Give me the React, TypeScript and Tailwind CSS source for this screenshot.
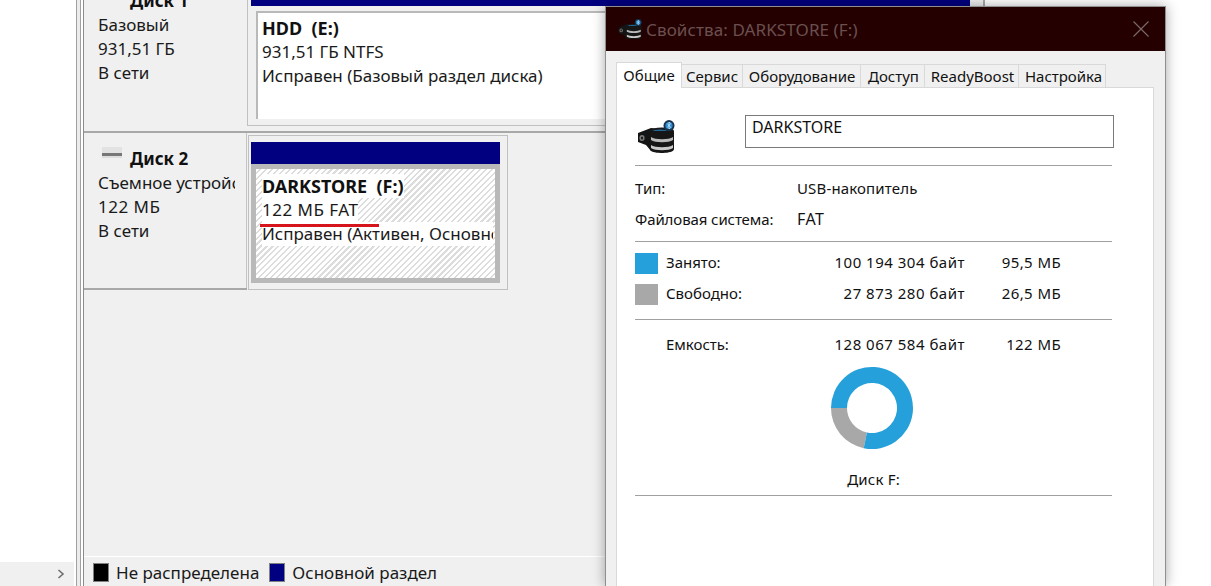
import React from "react";

const font = "font-['Noto_Sans','Open_Sans',sans-serif]";

const DiskGlyph = () => (
  <svg width="20" height="11" viewBox="0 0 20 11" className="shrink-0 ml-[4px] -translate-y-[7px]">
    <rect x="0" y="0" width="20" height="6" fill="#e2e2e2" />
    <rect x="0" y="6" width="20" height="3" fill="#777777" />
    <rect x="0" y="9" width="20" height="2" fill="#dddddd" />
  </svg>
);

const DriveIcon = ({ size }: { size: number }) => (
  <svg width={size} height={size * 0.87} viewBox="0 0 38 33" className="shrink-0">
    <path d="M1 13 L14 8 L24 9 L24 29 L14 31 L9 25 L1 22 Z" fill="#141414" />
    <ellipse cx="5" cy="18" rx="2.6" ry="3" fill="#7c7c7c" />
    <ellipse cx="5" cy="18" rx="1.2" ry="1.6" fill="#1c1c1c" />
    <ellipse cx="25" cy="11" rx="12" ry="3.4" fill="#1b1b1b" />
    <ellipse cx="23" cy="11" rx="7" ry="1.4" fill="#1e6a9e" />
    <path d="M13 11 H37 V29 C37 32 30 33 25 33 C19 33 13 32 13 29 Z" fill="#161616" />
    <path d="M14 17 C18 20 32 20 36 17 V20 C32 23 18 23 14 20 Z" fill="#b9b9b9" />
    <path d="M14 25 C18 28 32 28 36 25 V28 C32 31 18 31 14 28 Z" fill="#c9c9c9" />
    <circle cx="32" cy="5.5" r="5.5" fill="#16324d" />
    <circle cx="32" cy="5.5" r="3.6" fill="#2f8bd0" />
    <path d="M30.4 3.6 L33.6 7.4 L32 9 V2 L33.6 3.6 L30.4 7.4" fill="none" stroke="#d8ecfa" strokeWidth="0.7" />
  </svg>
);

const Partition = () => (
  <div className="flex flex-col w-[260px] h-[155px] mt-[2px] ml-px border border-[#c0c0c0] pt-[6px] pl-[2px] pr-[7px] pb-[6px]">
    <div className="h-[22px] bg-[#000080]" />
    <div className="relative flex-1 border-[5px] border-[#b9b9b9] bg-[repeating-linear-gradient(135deg,#ffffff_0px,#ffffff_2.6px,#dcdcdc_2.6px,#dcdcdc_4.2px)] pl-[6px] pt-[5px] overflow-hidden">
      <div className="flex flex-col items-start text-[17px] leading-[24px] text-[#1a1a1a] whitespace-nowrap">
        <span className="font-bold text-[18px] text-[#111111] bg-white">DARKSTORE&nbsp; (F:)</span>
        <span className="bg-white tracking-[0.5px]">122 МБ FAT</span>
        <span className="bg-white w-[231px] overflow-hidden">Исправен (Активен, Основной раздел)</span>
      </div>
      <div className="absolute left-[4px] top-[55px] w-[119px] h-[3px] bg-[#d5151b]" />
    </div>
  </div>
);

const Row = ({ label, value, size }: { label: string; value: string; size: string }) => (
  <div className="flex items-center h-[24px] pb-[2px]">
    <span className="w-[160px]">{label}</span>
    <span className="w-[139px] text-right whitespace-nowrap tracking-[0.5px]">{value}</span>
    <span className="w-[96px] text-right whitespace-nowrap tracking-[0.4px]">{size}</span>
  </div>
);

const tabs = [
  ["Сервис", "w-[62px]"],
  ["Оборудование", "w-[119px] pl-[1px]"],
  ["Доступ", "w-[65px] pl-[2px]"],
  ["ReadyBoost", "w-[95px] pl-[2px]"],
  ["Настройка", "w-[88px] pl-[3px]"],
];

// Properties dialog floating over the disk manager
const Dialog = () => (
  <div className="absolute left-[605px] top-[6px] w-[561px] h-[580px] flex flex-col bg-[#f0f0f0] border border-[#8f8f8f] border-b-0 shadow-[0_0_12px_rgba(0,0,0,0.35)]">
    <div className="h-[44px] shrink-0 bg-[#240000] flex items-center pl-[12px] pr-[16px] text-[#6b5050] text-[17px]">
      <DriveIcon size={24} />
      <span className="ml-[4px] pt-[2px] whitespace-nowrap tracking-[0.1px]">Свойства: DARKSTORE (F:)</span>
      <svg width="16" height="16" viewBox="0 0 16 16" className="ml-auto">
        <path d="M0.5 0.5 L15.5 15.5 M15.5 0.5 L0.5 15.5" stroke="#7d6a6a" strokeWidth="1.1" />
      </svg>
    </div>
    <div className="flex-1 pl-[10px] pr-[11px] pt-[11px] flex flex-col min-h-0">
      <div className="flex items-end h-[26px] shrink-0 text-[15px] text-[#111111] whitespace-nowrap relative z-10">
        <div className="w-[66px] h-[26px] bg-white border border-[#d9d9d9] border-b-0 flex items-center justify-center">Общие</div>
        {tabs.map(([name, w]) => (
          <div key={name} className={`${w} h-[24px] -ml-px border border-[#d9d9d9] bg-[#f0f0f0] flex items-center justify-center`}>
            {name}
          </div>
        ))}
      </div>
      <div className="flex-1 -mt-px bg-white border border-[#d9d9d9] border-b-0 pl-[18px] pr-[41px] text-[15px] text-[#111111]">
        <div className="flex items-start h-[78px] border-b border-[#a0a0a0]">
          <div className="mt-[32px] ml-[2px]">
            <DriveIcon size={38} />
          </div>
          <div className="mt-[27px] ml-[70px] w-[369px] -mr-[3px] h-[33px] border border-[#7a7a7a] pl-[6px] text-[16px] leading-[22px] shrink-0">DARKSTORE</div>
        </div>
        <div className="h-[76px] border-b border-[#a0a0a0] pt-[10px] flex flex-col gap-[7px]">
          <div className="flex h-[24px] items-center">
            <span className="w-[162px]">Тип:</span>
            <span className="tracking-[0.15px]">USB-накопитель</span>
          </div>
          <div className="flex h-[24px] items-center">
            <span className="w-[162px] whitespace-nowrap tracking-[-0.1px]">Файловая система:</span>
            <span className="text-[16px] tracking-[0.5px]">FAT</span>
          </div>
        </div>
        <div className="h-[78px] border-b border-[#a0a0a0] pt-[9px] flex flex-col gap-[7px]">
          <div className="flex items-center">
            <div className="w-[23px] h-[21px] bg-[#26a0da] mr-[8px] shrink-0" />
            <Row label="Занято:" value="100 194 304 байт" size="95,5 МБ" />
          </div>
          <div className="flex items-center">
            <div className="w-[23px] h-[21px] bg-[#a8a8a8] mr-[8px] shrink-0" />
            <Row label="Свободно:" value="27 873 280 байт" size="26,5 МБ" />
          </div>
        </div>
        <div className="h-[176px] border-b border-[#a0a0a0] flex flex-col">
          <div className="mt-[13px] ml-[31px]">
            <Row label="Емкость:" value="128 067 584 байт" size="122 МБ" />
          </div>
          <svg width="84" height="84" viewBox="-42 -42 84 84" className="self-center mt-[9px] -translate-x-[2px]">
            <path d="M-41 0 A41 41 0 0 0 -8.3 40.15 L-5.06 24.48 A25 25 0 0 1 -25 0 Z" fill="#a8a8a8" />
            <path d="M-41 0 A41 41 0 1 1 -8.3 40.15 L-5.06 24.48 A25 25 0 1 0 -25 0 Z" fill="#26a0da" />
          </svg>
          <div className="mt-[18px] text-center tracking-[0.2px]">Диск F:</div>
        </div>
      </div>
    </div>
  </div>
);

export default function App() {
  return (
    <div className={`relative w-[1211px] h-[586px] overflow-hidden bg-white flex ${font}`}>
      {/* nav pane */}
      <div className="w-[76px] shrink-0 flex flex-col justify-end">
        <div className="h-[24px] bg-[#f0f0f0] flex items-center justify-end pr-[9px] mr-[2px]">
          <svg width="8" height="10" viewBox="0 0 8 10">
            <path d="M1.5 1 L6 5 L1.5 9" fill="none" stroke="#6e6e6e" strokeWidth="1.6" />
          </svg>
        </div>
      </div>
      <div className="w-[8px] shrink-0 flex">
        <div className="w-[5px] bg-[#ececec] border-x border-[#a0a0a0]" />
        <div className="w-[3px] bg-white border-r border-[#8a8a8a]" />
      </div>

      {/* disk list */}
      <div className="w-[901px] shrink-0 flex flex-col bg-[#f0f0f0] border-r-2 border-[#a8a8a8] text-[17px] leading-[24px] text-[#1a1a1a]">
        <div className="h-[133px] shrink-0 flex border-b-2 border-[#a8a8a8] overflow-hidden">
          <div className="w-[163px] shrink-0 flex flex-col justify-end pl-[14px] pb-[46px]">
            <div className="flex items-center">
              <DiskGlyph />
              <span className="font-bold ml-[8px] text-[#111111]">Диск 1</span>
            </div>
            <span>Базовый</span>
            <span>931,51 ГБ</span>
            <span>В сети</span>
          </div>
          <div className="flex-1 flex flex-col h-[126px] border-l border-b border-[#c0c0c0] pl-[3px] pr-[13px]">
            <div className="h-[6px] shrink-0 bg-[#000080]" />
            <div className="mt-[5px] ml-[5px] h-[108px] shrink-0 border-2 border-[#b9b9b9] border-b-0 border-r-0 bg-white pl-[4px] pt-[3px] whitespace-nowrap">
              <div className="font-bold text-[18px] text-[#111111]">HDD&nbsp; (E:)</div>
              <div>931,51 ГБ NTFS</div>
              <div>Исправен (Базовый раздел диска)</div>
            </div>
          </div>
        </div>
        <div className="flex h-[157px] shrink-0 border-b-2 border-[#a8a8a8] w-[163px] relative">
          <div className="w-[163px] shrink-0 pl-[14px] pt-[14px] border-r border-[#c4c4c4] bg-[#f0f0f0]">
            <div className="flex items-center">
              <DiskGlyph />
              <span className="font-bold ml-[8px] text-[#111111]">Диск 2</span>
            </div>
            <div className="w-[137px] overflow-hidden whitespace-nowrap">Съемное устройство</div>
            <div className="tracking-[0.5px]">122 МБ</div>
            <div>В сети</div>
          </div>
          <div className="shrink-0">
            <Partition />
          </div>
        </div>
        <div className="flex-1" />
        <div className="h-[30px] shrink-0 border-t border-white flex items-center pl-[9px] pt-[2px] whitespace-nowrap">
          <div className="w-[16px] h-[19px] bg-black border border-[#808080] mr-[7px]" />
          <span>Не распределена</span>
          <div className="w-[16px] h-[19px] bg-[#000080] border border-[#808080] ml-[10px] mr-[7px]" />
          <span>Основной раздел</span>
        </div>
      </div>
      <Dialog />
    </div>
  );
}
